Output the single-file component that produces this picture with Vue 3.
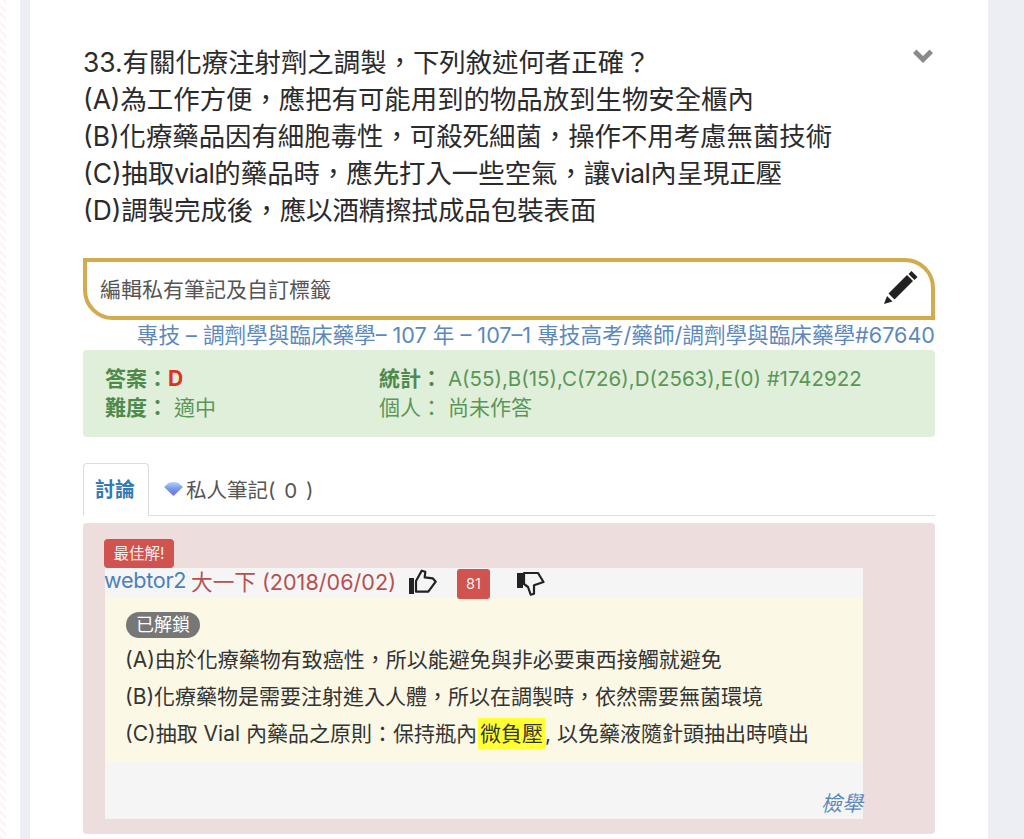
<script setup>
</script>

<template>
  <div class="page">
    <div class="strip"></div>
    <div class="gutter"></div>
    <div class="rail"></div>
    <main class="card">
      <div class="question">
        <div class="question-text">
          <div>33.有關化療注射劑之調製，下列敘述何者正確？</div>
          <div>(A)為工作方便，應把有可能用到的物品放到生物安全櫃內</div>
          <div>(B)化療藥品因有細胞毒性，可殺死細菌，操作不用考慮無菌技術</div>
          <div>(C)抽取<span class="latin">vial</span>的藥品時，應先打入一些空氣，讓<span class="latin">vial</span>內呈現正壓</div>
          <div>(D)調製完成後，應以酒精擦拭成品包裝表面</div>
        </div>
        <svg class="chevron" width="20" height="14" viewBox="0 0 20 14">
          <path d="M0 4 L3.500 .5 L10 7 L16.500 .5 L20 4 L10 14 Z" fill="#8a8a8a" />
        </svg>
      </div>

      <div class="note">
        <span>編輯私有筆記及自訂標籤</span>
        <svg width="34" height="34" viewBox="0 0 34 34">
          <path d="M0 33 L3 25 L8.500 30.500 Z" fill="#222" />
          <path d="M4.500 22.500 L23 4 L29 10 L10.500 28.500 Z" fill="#222" />
          <path d="M24.500 3 L27.500 0 L33.500 6 L30.500 9 Z" fill="#222" />
        </svg>
      </div>

      <div class="source">專技 – 調劑學與臨床藥學– 107 年 – 107–1 專技高考/藥師/調劑學與臨床藥學#67640</div>

      <div class="stats">
        <div class="stats-col">
          <div><b>答案：</b><b class="answer">D</b></div>
          <div><b>難度：</b> 適中</div>
        </div>
        <div class="stats-col">
          <div><b>統計：</b> <span class="numbers">A(55),B(15),C(726),D(2563),E(0) #1742922</span></div>
          <div>個人： 尚未作答</div>
        </div>
      </div>

      <div class="tabs">
        <div class="tab active">討論</div>
        <div class="tab">
          <svg class="gem" width="19" height="15" viewBox="0 0 19 15">
            <defs>
              <linearGradient id="gem" x1="0" y1="0" x2="0" y2="1">
                <stop offset="0" stop-color="#b5d2f7" />
                <stop offset="0.5" stop-color="#6f9ae8" />
                <stop offset="1" stop-color="#8a62de" />
              </linearGradient>
            </defs>
            <path d="M0 6 L4.500 2 Q9.500 0 14.500 2 L19 6 L9.500 15 Z" fill="url(#gem)" />
          </svg>
          <span class="tab-label">私人筆記( 0 )</span>
        </div>
      </div>

      <section class="best">
        <div class="best-label">最佳解!</div>
        <div class="post">
          <div class="post-head">
            <span class="user">webtor2</span>
            <span class="meta">大一下 (2018/06/02)</span>
            <svg class="thumb" width="28" height="28" viewBox="0 0 28 28">
              <rect x="0" y="9" width="5" height="16" fill="#222" />
              <path d="M7 12 L12.700 1.700 L16.300 2.700 L15.700 8.300 L23.700 9.300 L26.700 12.700 L19.300 22.700 H7 Z" fill="none" stroke="#222" stroke-width="2.200" stroke-linejoin="round" />
            </svg>
            <span class="count">81</span>
            <svg class="thumb down" width="28" height="28" viewBox="0 0 28 28">
              <rect x="0" y="4" width="6" height="15" fill="#222" />
              <path d="M7 4 H21 L26.500 13 L17 16.300 V24.700 L13.700 25.700 L11 18 L7 15 Z" fill="none" stroke="#222" stroke-width="2.200" stroke-linejoin="round" />
            </svg>
          </div>
          <div class="post-body">
            <span class="unlocked">已解鎖</span>
            <p>(A)由於化療藥物有致癌性，所以能避免與非必要東西接觸就避免</p>
            <p>(B)化療藥物是需要注射進入人體，所以在調製時，依然需要無菌環境</p>
            <p>(C)抽取 Vial 內藥品之原則：保持瓶內<mark>微負壓</mark>, 以免藥液隨針頭抽出時噴出</p>
          </div>
          <div class="post-foot"><i>檢舉</i></div>
        </div>
      </section>
    </main>
    <div class="side"></div>
  </div>
</template>

<style scoped>
.page {
  display: flex;
  height: 839px;
  overflow: hidden;
  background: #fff;
  color: #333;
  font-family: Inter, "Noto Sans CJK TC", sans-serif;
}

.strip {
  width: 6px;
  background: repeating-linear-gradient(45deg, #fdf4f4 0 3px, #fff 3px 6px);
}

.gutter {
  width: 14px;
}

.rail {
  width: 10px;
  background: #edeef4;
}

.side {
  flex: 1;
  background: #edeef4;
}

.card {
  width: 852px;
  padding: 44px 53px 0;
  background: #fff;
}

.question {
  display: flex;
  justify-content: space-between;
  align-items: flex-start;
  height: 214px;
}

.question-text {
  font-size: 26.4px;
  line-height: 37px;
  color: #2b2b2b;
  white-space: nowrap;
}

.latin {
  letter-spacing: -0.6px;
}

.chevron {
  margin: 5px 2px 0 0;
}

.note {
  display: flex;
  align-items: center;
  justify-content: space-between;
  box-sizing: border-box;
  height: 62px;
  padding: 0 13px 2px 13px;
  border: 4px solid #d3ab4f;
  border-radius: 0 30px 0 30px;
  font-size: 21px;
  color: #555;
}

.source {
  height: 30px;
  font-size: 21.6px;
  line-height: 30px;
  color: #5c88bd;
  text-align: right;
  white-space: nowrap;
}

.stats {
  display: flex;
  box-sizing: border-box;
  height: 87px;
  padding: 14px 21px 15px 22px;
  border-radius: 4px;
  background: #e0efda;
  color: #5b9659;
  font-size: 21px;
  line-height: 29px;
  white-space: nowrap;
}

.stats-col:first-child {
  width: 274px;
}

.stats b {
  font-weight: 700;
  color: #4f8a4d;
}

.stats .answer {
  color: #e0311f;
}

.numbers {
  font-size: 20.500px;
}

.tabs {
  display: flex;
  height: 53px;
  margin-top: 26px;
  box-sizing: border-box;
  border-bottom: 1px solid #ddd;
  font-size: 20.5px;
}

.tab {
  display: flex;
  align-items: center;
  box-sizing: border-box;
  height: 52px;
  padding: 0 15px 1px;
  color: #555;
}

.gem {
  margin-right: 3px;
}

.tab-label {
  word-spacing: 3px;
}

.tab.active {
  width: 66px;
  height: 53px;
  padding: 0 11px 2px;
  border: 1px solid #ddd;
  border-bottom-color: #fff;
  border-radius: 4px 4px 0 0;
  background: #fff;
  color: #337ab7;
  font-size: 20px;
  font-weight: 700;
}

.best {
  box-sizing: border-box;
  height: 311px;
  margin-top: 7px;
  padding: 16px 0 0 22px;
  border-radius: 4px;
  background: #eddddd;
}

.best-label {
  box-sizing: border-box;
  width: 70px;
  height: 29px;
  margin-left: -1px;
  border-radius: 4px;
  background: #d0534f;
  color: #fbeeee;
  font-size: 15.500px;
  line-height: 29px;
  text-align: center;
}

.post {
  width: 758px;
  background: #f5f5f5;
}

.post-head {
  display: flex;
  align-items: center;
  height: 30px;
  font-size: 21.6px;
  white-space: nowrap;
}

.user {
  margin: 0 0 6px -1px;
  letter-spacing: -0.3px;
  color: #4a80bd;
}

.meta {
  margin: 0 0 6px 5px;
  color: #b5514f;
}

.thumb {
  margin-left: 13px;
}

.count {
  width: 33px;
  height: 30px;
  margin: 2px 0 0 20px;
  border-radius: 3px;
  background: #d0534f;
  color: #fbeeee;
  font-size: 14.500px;
  line-height: 30px;
  text-align: center;
}

.thumb.down {
  margin-left: 27px;
}

.post-body {
  box-sizing: border-box;
  height: 164px;
  padding: 14px 21px 0;
  background: #fbf8e6;
  color: #333;
  font-size: 21px;
  white-space: nowrap;
}

.post-body p {
  margin: 0 0 0 -1px;
  line-height: 37px;
}

.unlocked {
  display: block;
  width: 74px;
  height: 26px;
  margin-bottom: 3px;
  border-radius: 13px;
  background: #777;
  color: #fff;
  font-size: 18px;
  line-height: 26px;
  text-align: center;
}

mark {
  margin-left: 1px;
  padding: 3px 2px;
  background: #ffff33;
  color: inherit;
}

.post-foot {
  height: 57px;
  box-sizing: border-box;
  padding-top: 28px;
  font-size: 21px;
  line-height: 28px;
  color: #5c88bd;
  text-align: right;
}
</style>

<style>
html, body {
  margin: 0;
  background: #fff;
}
</style>
